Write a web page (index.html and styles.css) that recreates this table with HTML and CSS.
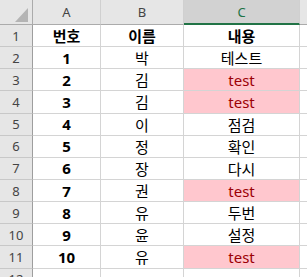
FILE: index.html
```html
<!DOCTYPE html>
<html lang="ko">
<head>
<meta charset="utf-8">
<link rel="stylesheet" href="styles.css">
</head>
<body>
<div class="sheet">
  <div class="hd corner"><svg width="33" height="25" viewBox="0 0 33 25"><polygon points="28,8 28,22 15,22" fill="#b4b4b4"/></svg></div>
  <div class="hd col">A</div>
  <div class="hd col">B</div>
  <div class="hd col sel">C</div>
  <div class="hd col last"></div>

  <div class="rh">1</div><div class="c b">번호</div><div class="c b">이름</div><div class="c b">내용</div><div class="c last"></div>
  <div class="rh">2</div><div class="c b">1</div><div class="c">박</div><div class="c">테스트</div><div class="c last"></div>
  <div class="rh">3</div><div class="c b">2</div><div class="c">김</div><div class="c bad">test</div><div class="c last"></div>
  <div class="rh">4</div><div class="c b">3</div><div class="c">김</div><div class="c bad">test</div><div class="c last"></div>
  <div class="rh">5</div><div class="c b">4</div><div class="c">이</div><div class="c">점검</div><div class="c last"></div>
  <div class="rh">6</div><div class="c b">5</div><div class="c">정</div><div class="c">확인</div><div class="c last"></div>
  <div class="rh">7</div><div class="c b">6</div><div class="c">장</div><div class="c">다시</div><div class="c last"></div>
  <div class="rh">8</div><div class="c b">7</div><div class="c">권</div><div class="c bad">test</div><div class="c last"></div>
  <div class="rh">9</div><div class="c b">8</div><div class="c">유</div><div class="c">두번</div><div class="c last"></div>
  <div class="rh">10</div><div class="c b">9</div><div class="c">윤</div><div class="c">설정</div><div class="c last"></div>
  <div class="rh">11</div><div class="c b">10</div><div class="c">유</div><div class="c bad">test</div><div class="c last"></div>
  <div class="rh">12</div><div class="c"></div><div class="c"></div><div class="c"></div><div class="c last"></div>
</div>
</body>
</html>
```
FILE: styles.css
```css
html, body {
  margin: 0;
  padding: 0;
  background: #ffffff;
  overflow: hidden;
  width: 307px;
  height: 277px;
}
.sheet {
  display: grid;
  grid-template-columns: 33px 68px 83px 116px 1fr;
  grid-template-rows: 25px repeat(12, 22.15px);
  font-family: "Noto Sans", "Noto Sans CJK KR", sans-serif;
  font-size: 15px;
  color: #000;
}
.sheet > div {
  box-sizing: border-box;
  display: flex;
  align-items: center;
  justify-content: center;
  overflow: hidden;
  white-space: nowrap;
}
.hd {
  background: #e6e6e6;
  border-bottom: 1px solid #ababab;
  border-right: 1px solid #d0d0d0;
  color: #444;
  font-size: 13px;
  position: relative;
}
.corner {
  border-right: 1px solid #ababab;
  padding: 0;
}
.corner svg {
  position: absolute;
  left: 0;
  top: 0;
}
.col.sel {
  background: #d2d2d2;
  color: #217346;
  border-bottom: 2px solid #217346;
}
.col.last {
  border-right: none;
}
.rh {
  background: #e6e6e6;
  border-right: 1px solid #9e9e9e;
  border-bottom: 1px solid #c8c8c8;
  color: #444;
  font-size: 13px;
}
.c {
  border-right: 1px solid #d4d4d4;
  border-bottom: 1px solid #d4d4d4;
}
.c.last {
  border-right: none;
}
.b {
  font-weight: 700;
}
.bad {
  background: #ffc7ce;
  color: #9c0006;
}
```
